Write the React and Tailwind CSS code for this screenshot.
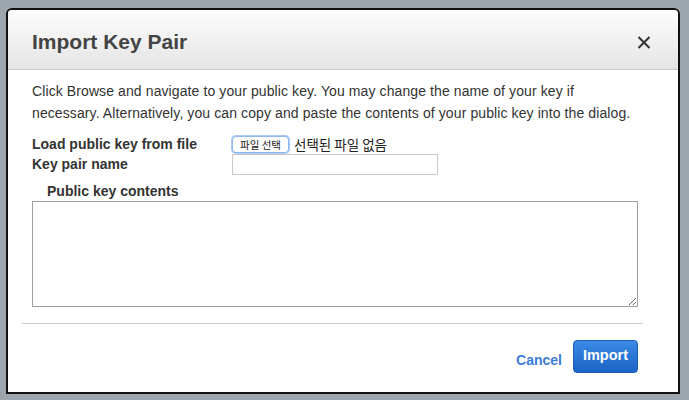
import React from "react";

export default function App() {
  return (
    <div className="w-[689px] h-[400px] bg-[#9ea6ad] pt-[8px] pl-[6px] font-['Liberation_Sans',Arial,sans-serif] text-[#333]">
      <div className="w-[674px] h-[386px] bg-white border-2 border-[#111] rounded-t-[6px] flex flex-col overflow-hidden">
        <div className="h-[60px] shrink-0 flex items-center justify-between pl-[24px] pr-[27px] bg-gradient-to-b from-[#fdfdfd] to-[#e5e5e5] border-b border-[#c8c8c8]">
          <h1 className="text-[21px] font-bold text-[#444] pt-[4px]">Import Key Pair</h1>
          <svg width="14" height="13" viewBox="0 0 14 13" className="text-[#333] mt-[5px]">
            <path d="M1.5 1 L12.5 12 M12.5 1 L1.5 12" stroke="currentColor" strokeWidth="2" strokeLinecap="butt" />
          </svg>
        </div>
        <div className="px-[24px] pt-[10px] flex flex-col">
          <p className="text-[14px] tracking-[0.1px] leading-[22px] text-[#333] w-[612px]">
            Click Browse and navigate to your public key. You may change the name of your key if necessary. Alternatively, you can copy and paste the contents of your public key into the dialog.
          </p>
          <div className="mt-[10px] flex items-center h-[20px]">
            <span className="w-[200px] text-[14px] font-bold text-[#333]">Load public key from file</span>
            <button className="h-[17px] px-[7px] text-[10.5px] leading-[15px] bg-white border border-[#8fb8ec] rounded-[4px] shadow-[0_0_0_1px_#a9c9f0] font-['Noto_Sans_CJK_KR',sans-serif] text-[#222]">파일 선택</button>
            <span className="ml-[5px] text-[13.5px] font-['Noto_Sans_CJK_KR',sans-serif] text-[#222]">선택된 파일 없음</span>
          </div>
          <div className="flex items-center h-[21px]">
            <span className="w-[200px] text-[14px] font-bold text-[#333]">Key pair name</span>
            <input className="w-[206px] h-[21px] border border-[#c9c9c9] bg-white outline-none" />
          </div>
          <div className="mt-[8px] pl-[15px] text-[14px] font-bold text-[#333] leading-[16px]">Public key contents</div>
          <textarea className="mt-[2px] w-[606px] h-[106px] border border-[#a0a0a0] bg-white outline-none resize" />
        </div>
        <div className="ml-[14px] w-[621px] mt-[16px] border-t border-[#cccccc]" />
        <div className="flex items-center justify-end pr-[40px] pt-[16px] gap-[11px]">
          <span className="text-[14px] font-bold text-[#3b7ddd] pt-[7px]">Cancel</span>
          <button className="w-[65px] h-[33px] rounded-[4px] border border-[#1b5fb4] bg-gradient-to-b from-[#3a8ae6] to-[#1c63c6] text-white text-[14.5px] font-bold pb-[2px]">Import</button>
        </div>
      </div>
    </div>
  );
}
